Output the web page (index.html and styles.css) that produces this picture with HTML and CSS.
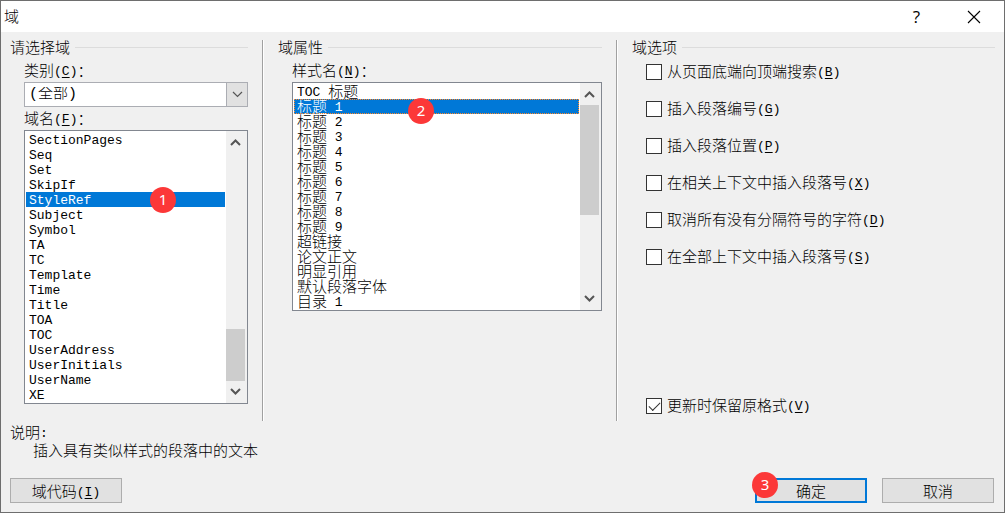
FILE: index.html
```html
<!DOCTYPE html>
<html lang="zh-CN">
<head>
<meta charset="utf-8">
<title>域</title>
<link rel="stylesheet" href="styles.css">
</head>
<body>
<main class="dialog">
  <header class="titlebar">
    <h1 class="title">域</h1>
    <button class="caption-btn help" type="button" aria-label="帮助">?</button>
    <button class="caption-btn" type="button" aria-label="关闭">
      <svg width="14" height="14" viewBox="0 0 14 14" fill="none" stroke="#000" stroke-width="1.1"><path d="M1 1L13 13M13 1L1 13"/></svg>
    </button>
  </header>
  <div class="content">
    <div class="panels">
      <section class="panel">
        <h2 class="heading">请选择域</h2>
        <div class="fields">
          <label class="label" for="category">类别<span class="en">(<u>C</u>)</span>：</label>
          <div class="combo">
            <select id="category" class="combo-select"><option>(全部)</option></select>
            <span class="combo-arrow"><svg width="11" height="7" viewBox="0 0 11 7" fill="none" stroke="#555" stroke-width="1.2"><path d="M1 1L5.500 5.500L10 1"/></svg></span>
          </div>
          <span class="label name-label" id="field-label">域名<span class="en">(<u>F</u>)</span>：</span>
          <div class="listbox">
            <ul class="items latin" role="listbox" aria-labelledby="field-label" tabindex="0">
              <li class="item" role="option">SectionPages</li>
              <li class="item" role="option">Seq</li>
              <li class="item" role="option">Set</li>
              <li class="item" role="option">SkipIf</li>
              <li class="item selected" role="option" aria-selected="true">StyleRef<span class="badge badge-one">1</span></li>
              <li class="item" role="option">Subject</li>
              <li class="item" role="option">Symbol</li>
              <li class="item" role="option">TA</li>
              <li class="item" role="option">TC</li>
              <li class="item" role="option">Template</li>
              <li class="item" role="option">Time</li>
              <li class="item" role="option">Title</li>
              <li class="item" role="option">TOA</li>
              <li class="item" role="option">TOC</li>
              <li class="item" role="option">UserAddress</li>
              <li class="item" role="option">UserInitials</li>
              <li class="item" role="option">UserName</li>
              <li class="item" role="option">XE</li>
            </ul>
            <div class="scrollbar">
              <svg class="arrow" viewBox="0 0 19 22" fill="none" stroke="#555" stroke-width="2"><path d="M5 14L9.500 9.500L14 14"/></svg>
              <div class="track track-end"><div class="thumb thumb-short"></div></div>
              <svg class="arrow" viewBox="0 0 19 22" fill="none" stroke="#555" stroke-width="2"><path d="M5 8L9.500 12.500L14 8"/></svg>
            </div>
          </div>
        </div>
      </section>
      <section class="panel">
        <h2 class="heading">域属性</h2>
        <div class="fields">
          <span class="label" id="style-label">样式名<span class="en">(<u>N</u>)</span>：</span>
          <div class="listbox">
            <ul class="items" role="listbox" aria-labelledby="style-label" tabindex="0">
              <li class="item" role="option"><span class="en">TOC </span>标题</li>
              <li class="item selected focused" role="option" aria-selected="true">标题<span class="en"> 1</span><span class="badge badge-two">2</span></li>
              <li class="item" role="option">标题<span class="en"> 2</span></li>
              <li class="item" role="option">标题<span class="en"> 3</span></li>
              <li class="item" role="option">标题<span class="en"> 4</span></li>
              <li class="item" role="option">标题<span class="en"> 5</span></li>
              <li class="item" role="option">标题<span class="en"> 6</span></li>
              <li class="item" role="option">标题<span class="en"> 7</span></li>
              <li class="item" role="option">标题<span class="en"> 8</span></li>
              <li class="item" role="option">标题<span class="en"> 9</span></li>
              <li class="item" role="option">超链接</li>
              <li class="item" role="option">论文正文</li>
              <li class="item" role="option">明显引用</li>
              <li class="item" role="option">默认段落字体</li>
              <li class="item" role="option">目录<span class="en"> 1</span></li>
            </ul>
            <div class="scrollbar">
              <svg class="arrow" viewBox="0 0 19 22" fill="none" stroke="#555" stroke-width="2"><path d="M5 14L9.500 9.500L14 14"/></svg>
              <div class="track"><div class="thumb thumb-long"></div></div>
              <svg class="arrow" viewBox="0 0 19 22" fill="none" stroke="#555" stroke-width="2"><path d="M5 8L9.500 12.500L14 8"/></svg>
            </div>
          </div>
        </div>
      </section>
      <section class="panel">
        <h2 class="heading">域选项</h2>
        <div class="options">
          <label class="option"><input class="check" type="checkbox"><span class="option-text">从页面底端向顶端搜索<span class="en">(<u>B</u>)</span></span></label>
          <label class="option"><input class="check" type="checkbox"><span class="option-text">插入段落编号<span class="en">(<u>G</u>)</span></span></label>
          <label class="option"><input class="check" type="checkbox"><span class="option-text">插入段落位置<span class="en">(<u>P</u>)</span></span></label>
          <label class="option"><input class="check" type="checkbox"><span class="option-text">在相关上下文中插入段落号<span class="en">(<u>X</u>)</span></span></label>
          <label class="option"><input class="check" type="checkbox"><span class="option-text">取消所有没有分隔符号的字符<span class="en">(<u>D</u>)</span></span></label>
          <label class="option"><input class="check" type="checkbox"><span class="option-text">在全部上下文中插入段落号<span class="en">(<u>S</u>)</span></span></label>
          <label class="option preserve"><input class="check" type="checkbox" checked><span class="option-text">更新时保留原格式<span class="en">(<u>V</u>)</span></span></label>
        </div>
      </section>
    </div>
    <section class="description">
      <h2 class="description-title">说明<span class="en">:</span></h2>
      <p class="description-text">插入具有类似样式的段落中的文本</p>
    </section>
    <footer class="actions">
      <button class="btn codes" type="button">域代码<span class="en">(<u>I</u>)</span></button>
      <div class="confirm">
        <button class="btn primary" type="button">确定</button>
        <span class="badge badge-three">3</span>
      </div>
      <button class="btn" type="button">取消</button>
    </footer>
  </div>
</main>
</body>
</html>
```

FILE: styles.css
```css
* { box-sizing: border-box; }

body {
  margin: 0;
  background: #f0f0f0;
  color: #000;
  font: 300 15px/16px "Noto Sans CJK SC", sans-serif;
}

h1, h2, p, ul { margin: 0; padding: 0; font-size: 15px; font-weight: inherit; }
ul { list-style: none; }
button, select, input { margin: 0; color: inherit; font: inherit; }
u { text-decoration-skip-ink: none; text-underline-offset: 2px; }

.en, .latin { font-family: "Liberation Mono", monospace; font-size: 13px; }
.en {
  line-height: 1px;
  vertical-align: 1px;
  white-space: pre;
}

.dialog {
  display: flex;
  flex-direction: column;
  min-height: 100vh;
  border: 1px solid #6e6e6e;
}

.titlebar {
  display: flex;
  align-items: center;
  height: 31px;
  padding-left: 3px;
  background: #fff;
}
.title { flex: 1; height: 16px; line-height: 14px; }
.caption-btn {
  display: flex;
  align-items: center;
  justify-content: center;
  width: 57px;
  height: 31px;
  padding: 0;
  border: 0;
  background: none;
}
.caption-btn:last-child { margin-right: 2px; }
.help { font: 17px/17px "Open Sans", sans-serif; }

.content {
  display: flex;
  flex: 1;
  flex-direction: column;
  padding: 8px 9px 9px;
}

.panels {
  display: grid;
  grid-template-columns: 252fr 354fr 379fr;
}
.panel { display: flex; flex-direction: column; padding-right: 14px; }
.panel + .panel {
  padding-left: 15px;
  border-left: 1px solid #a0a0a0;
  box-shadow: inset 1px 0 #fff;
}
.panel:last-child { padding-right: 0; }

.heading {
  display: flex;
  gap: 5px;
  height: 15px;
  line-height: 13px;
}
.heading::after {
  content: "";
  flex: 1;
  height: 1px;
  margin-top: 7px;
  background: #dcdcdc;
}

.fields {
  display: flex;
  flex-direction: column;
  padding: 8px 0 17px 14px;
}
.label { height: 16px; margin-bottom: 3px; line-height: 14px; }
.name-label { margin-top: 4px; }

.combo { position: relative; display: flex; }
.combo-select {
  flex: 1;
  height: 25px;
  padding: 0 24px 0 4px;
  border: 1px solid #abadb3;
  border-radius: 0;
  appearance: none;
  background: #fff;
  font-family: "Liberation Mono", "Noto Sans CJK SC", monospace;
}
.combo-arrow {
  position: absolute;
  top: 0;
  right: 0;
  display: flex;
  align-items: center;
  justify-content: center;
  width: 22px;
  height: 25px;
  border: 1px solid #abadb3;
  background: #e1e1e1;
  pointer-events: none;
}

.listbox {
  display: flex;
  border: 1px solid #828790;
  background: #fff;
}
.items { flex: 1; padding: 1px; outline: 0; }
.item {
  position: relative;
  height: 15px;
  padding-left: 3px;
  line-height: 13px;
}
.latin .item { line-height: 17px; }
.selected { background: #0078d7; color: #fff; }
.focused { outline: 1px dotted #ff8728; outline-offset: -1px; }

.scrollbar {
  display: flex;
  flex-direction: column;
  width: 21px;
  padding-right: 2px;
  background: #f0f0f0;
}
.arrow { width: 19px; height: 22px; }
.track { display: flex; flex: 1; flex-direction: column; }
.track-end { justify-content: flex-end; }
.thumb { background: #cdcdcd; }
.thumb-short { height: 23%; }
.thumb-long { height: 60%; }

.options {
  display: flex;
  flex: 1;
  flex-direction: column;
  gap: 21px;
  padding: 9px 0 7px 14px;
}
.option { display: flex; gap: 5px; height: 16px; }
.option-text { line-height: 14px; }
.preserve { margin-top: auto; }
.check {
  width: 16px;
  height: 16px;
  border: 1px solid #333;
  appearance: none;
  background: #fff;
}
.check:checked::before {
  content: "";
  display: block;
  width: 10px;
  height: 5px;
  margin: 3px 2px;
  border: solid #333;
  border-width: 0 0 1px 1px;
  transform: rotate(-45deg);
}

.description { padding-top: 3px; }
.description-text { padding: 2px 0 0 23px; }

.actions {
  display: flex;
  gap: 15px;
  margin-top: auto;
  padding-right: 1px;
}
.btn {
  width: 112px;
  height: 25px;
  padding: 0;
  border: 1px solid #adadad;
  background: #e1e1e1;
}
.primary { border: 2px solid #0078d7; }
.codes { margin-right: auto; }
.confirm { position: relative; }

.badge {
  position: absolute;
  z-index: 1;
  width: 26px;
  height: 26px;
  border-radius: 50%;
  background: #fc3838;
  color: #fff;
  font: 15px/24px "Noto Sans", sans-serif;
  text-align: center;
}
.badge-one { top: -5px; left: 124px; }
.badge-two { top: -1px; left: 114px; }
.badge-three { top: -6px; left: -3px; }
```
